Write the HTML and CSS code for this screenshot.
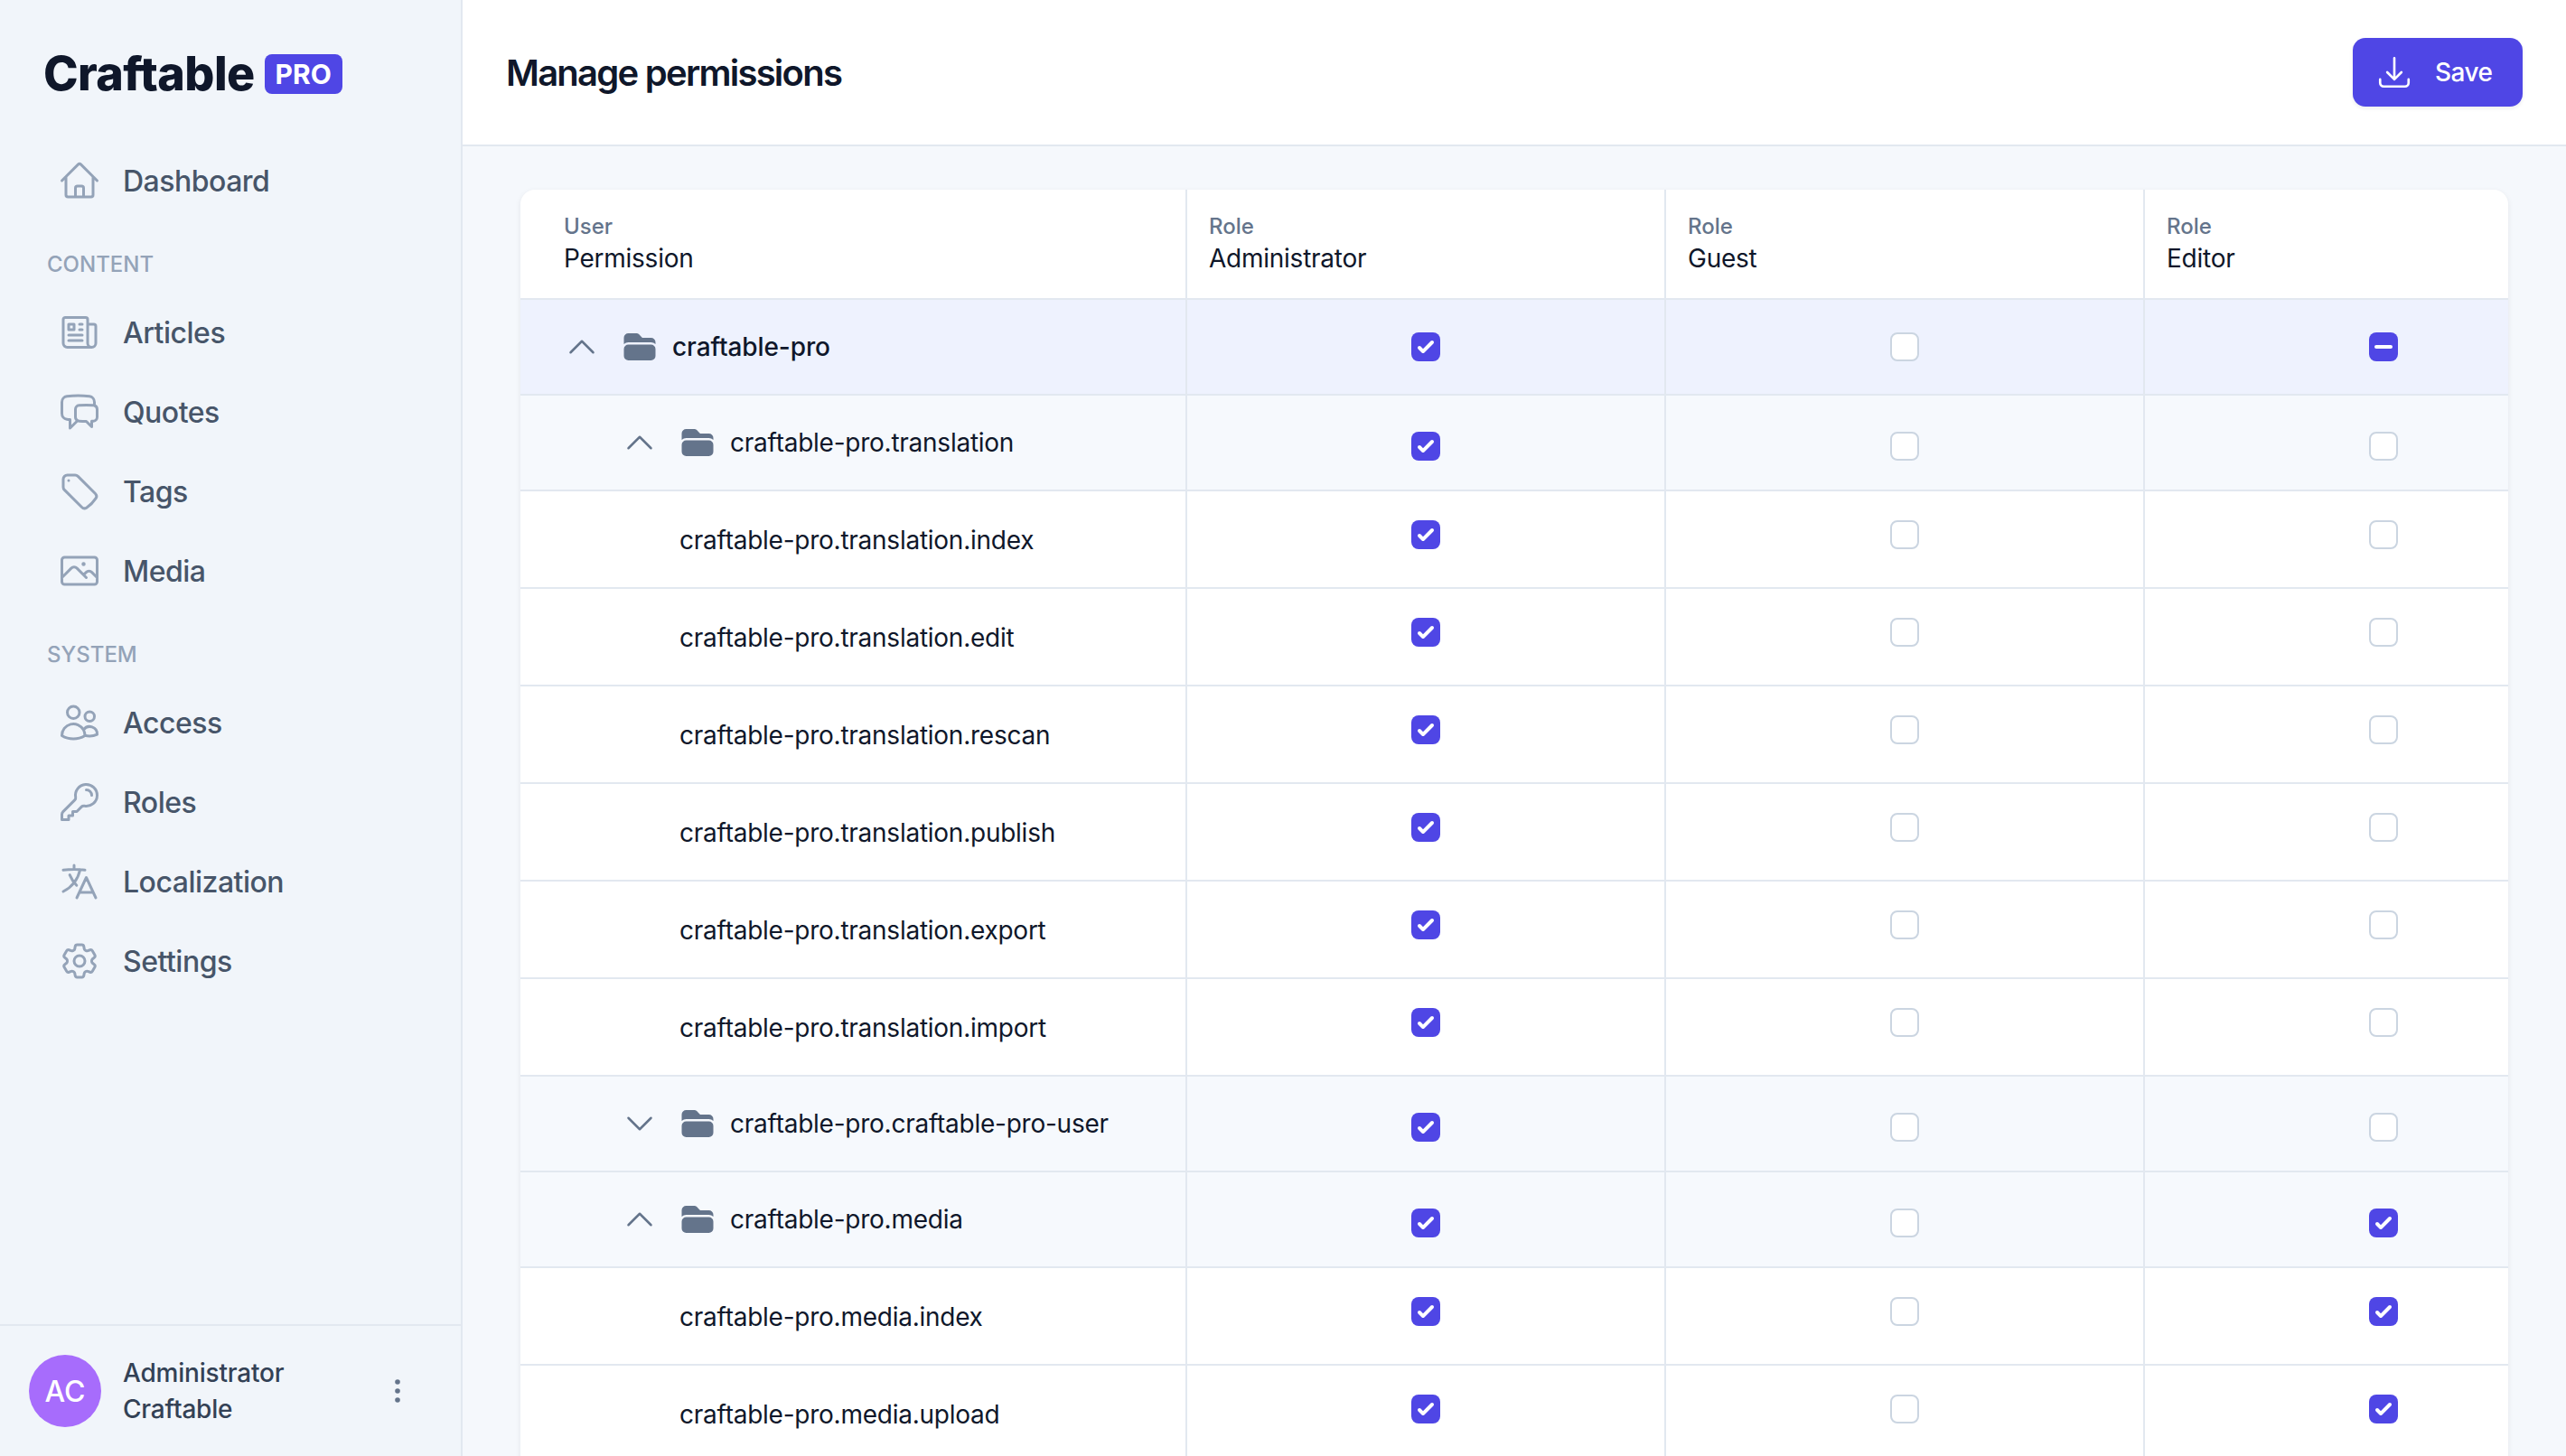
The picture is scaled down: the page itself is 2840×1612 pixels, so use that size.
FILE: index.html
```html
<!DOCTYPE html>
<html lang="en">
<head>
    <meta charset="UTF-8">
    <meta name="viewport" content="width=device-width, initial-scale=1.0">
    <title>Manage permissions</title>
    <link rel="stylesheet" href="styles.css">
</head>
<body>
<svg class="sprite" xmlns="http://www.w3.org/2000/svg">
    <symbol id="i-home" viewBox="0 0 24 24"><path d="M2.25 12l8.954-8.955c.44-.439 1.152-.439 1.591 0L21.75 12M4.5 9.75v10.125c0 .621.504 1.125 1.125 1.125H9.75v-4.875c0-.621.504-1.125 1.125-1.125h2.25c.621 0 1.125.504 1.125 1.125V21h4.125c.621 0 1.125-.504 1.125-1.125V9.75M8.25 21h8.25"/></symbol>
    <symbol id="i-news" viewBox="0 0 24 24"><path d="M12 7.5h1.5m-1.5 3h1.5m-7.5 3h7.5m-7.5 3h7.5m3-9h3.375c.621 0 1.125.504 1.125 1.125V18a2.25 2.25 0 01-2.25 2.25M16.5 7.5V18a2.25 2.25 0 002.25 2.25M16.5 7.5V4.875c0-.621-.504-1.125-1.125-1.125H4.125C3.504 3.75 3 4.254 3 4.875V18a2.25 2.25 0 002.25 2.25h13.5M6 7.5h3v3H6v-3z"/></symbol>
    <symbol id="i-chat" viewBox="0 0 24 24"><path d="M20.25 8.511c.884.284 1.5 1.128 1.5 2.097v4.286c0 1.136-.847 2.1-1.98 2.193-.34.027-.68.052-1.02.072v3.091l-3-3c-1.354 0-2.694-.055-4.02-.163a2.115 2.115 0 01-.825-.242m9.345-8.334a2.126 2.126 0 00-.476-.095 48.64 48.64 0 00-8.048 0c-1.131.094-1.976 1.057-1.976 2.192v4.286c0 .837.46 1.58 1.155 1.951m9.345-8.334V6.637c0-1.621-1.152-3.026-2.76-3.235A48.455 48.455 0 0011.25 3c-2.115 0-4.198.137-6.24.402-1.608.209-2.76 1.614-2.76 3.235v6.226c0 1.621 1.152 3.026 2.76 3.235.577.075 1.157.14 1.74.194V21l4.155-4.155"/></symbol>
    <symbol id="i-tag" viewBox="0 0 24 24"><path d="M9.568 3H5.25A2.25 2.25 0 003 5.25v4.318c0 .597.237 1.17.659 1.591l9.581 9.581c.699.699 1.78.872 2.607.33a18.095 18.095 0 005.223-5.223c.542-.827.369-1.908-.33-2.607L11.16 3.66A2.25 2.25 0 009.568 3z"/><path d="M6 6h.008v.008H6V6z"/></symbol>
    <symbol id="i-photo" viewBox="0 0 24 24"><path d="M2.25 15.75l5.159-5.159a2.25 2.25 0 013.182 0l5.159 5.159m-1.5-1.5l1.409-1.409a2.25 2.25 0 013.182 0l2.909 2.909m-18 3.75h16.5a1.5 1.5 0 001.5-1.5V6a1.5 1.5 0 00-1.5-1.5H3.75A1.5 1.5 0 002.25 6v12a1.5 1.5 0 001.5 1.5zm10.5-11.25h.008v.008h-.008V8.25zm.375 0a.375.375 0 11-.75 0 .375.375 0 01.75 0z"/></symbol>
    <symbol id="i-users" viewBox="0 0 24 24"><path d="M15 19.128a9.38 9.38 0 002.625.372 9.337 9.337 0 004.121-.952 4.125 4.125 0 00-7.533-2.493M15 19.128v-.003c0-1.113-.285-2.16-.786-3.07M15 19.128v.106A12.318 12.318 0 018.624 21c-2.331 0-4.512-.645-6.374-1.766l-.001-.109a6.375 6.375 0 0111.964-3.07M12 6.375a3.375 3.375 0 11-6.75 0 3.375 3.375 0 016.75 0zm8.25 2.25a2.625 2.625 0 11-5.25 0 2.625 2.625 0 015.25 0z"/></symbol>
    <symbol id="i-key" viewBox="0 0 24 24"><path d="M15.75 5.25a3 3 0 013 3m3 0a6 6 0 01-7.029 5.912c-.563-.097-1.159.026-1.563.43L10.5 17.25H8.25v2.25H6v2.25H2.25v-2.818c0-.597.237-1.17.659-1.591l6.499-6.499c.404-.404.527-1 .43-1.563A6 6 0 1121.75 8.25z"/></symbol>
    <symbol id="i-lang" viewBox="0 0 24 24"><path d="M10.5 21l5.25-11.25L21 21m-9-3h7.5M3 5.621a48.474 48.474 0 016-.371m0 0c1.12 0 2.233.038 3.334.114M9 5.25V3m3.334 2.364C11.176 10.658 7.69 15.08 3 17.502m9.334-12.138c.896.061 1.785.147 2.666.257m-4.589 8.495a18.023 18.023 0 01-3.827-5.802"/></symbol>
    <symbol id="i-cog" viewBox="0 0 24 24"><path d="M9.594 3.94c.09-.542.56-.94 1.11-.94h2.593c.55 0 1.02.398 1.11.94l.213 1.281c.063.374.313.686.645.87.074.04.147.083.22.127.324.196.72.257 1.075.124l1.217-.456a1.125 1.125 0 011.37.49l1.296 2.247a1.125 1.125 0 01-.26 1.431l-1.003.827c-.293.24-.438.613-.431.992a6.759 6.759 0 010 .255c-.007.378.138.75.43.99l1.005.828c.424.35.534.954.26 1.43l-1.298 2.247a1.125 1.125 0 01-1.369.491l-1.217-.456c-.355-.133-.75-.072-1.076.124a6.57 6.57 0 01-.22.128c-.331.183-.581.495-.644.869l-.213 1.28c-.09.543-.56.941-1.11.941h-2.594c-.55 0-1.02-.398-1.11-.94l-.213-1.281c-.062-.374-.312-.686-.644-.87a6.52 6.52 0 01-.22-.127c-.325-.196-.72-.257-1.076-.124l-1.217.456a1.125 1.125 0 01-1.369-.49l-1.297-2.247a1.125 1.125 0 01.26-1.431l1.004-.827c.292-.24.437-.613.43-.992a6.932 6.932 0 010-.255c.007-.378-.138-.75-.43-.99l-1.004-.828a1.125 1.125 0 01-.26-1.43l1.297-2.247a1.125 1.125 0 011.37-.491l1.216.456c.356.133.751.072 1.076-.124.072-.044.146-.087.22-.128.332-.183.582-.495.644-.869l.214-1.281z"/><path d="M15 12a3 3 0 11-6 0 3 3 0 016 0z"/></symbol>
    <symbol id="i-tray" viewBox="0 0 24 24"><path d="M3 16.5v2.25A2.25 2.25 0 005.25 21h13.5A2.25 2.25 0 0021 18.75V16.5M16.5 12L12 16.5m0 0L7.5 12m4.5 4.5V3"/></symbol>
    <symbol id="i-up" viewBox="0 0 24 24"><path d="M4.5 15.75l7.5-7.5 7.5 7.5"/></symbol>
    <symbol id="i-down" viewBox="0 0 24 24"><path d="M19.5 8.25l-7.5 7.5-7.5-7.5"/></symbol>
    <symbol id="i-folder" viewBox="0 0 24 24"><path d="M19.5 21a3 3 0 003-3v-4.5a3 3 0 00-3-3h-15a3 3 0 00-3 3V18a3 3 0 003 3h15zM1.5 10.146V6a3 3 0 013-3h5.379a2.25 2.25 0 011.59.659l2.122 2.121c.14.141.331.22.53.22H19.5a3 3 0 013 3v1.146A4.483 4.483 0 0019.5 9h-15a4.483 4.483 0 00-3 1.146z"/></symbol>
    <symbol id="i-check" viewBox="0 0 16 16"><path d="M12.207 4.793a1 1 0 010 1.414l-5 5a1 1 0 01-1.414 0l-2-2a1 1 0 011.414-1.414L6.5 9.086l4.293-4.293a1 1 0 011.414 0z"/></symbol>
    <symbol id="i-minus" viewBox="0 0 32 32"><rect x="6" y="14" width="20" height="4" rx="2"/></symbol>
    <symbol id="i-dots" viewBox="0 0 40 40"><circle cx="20" cy="10" r="2.8"/><circle cx="20" cy="20" r="2.8"/><circle cx="20" cy="30" r="2.8"/></symbol>
</svg>

<aside class="sidebar">
    <div class="logo">
        <span class="logo-name">Craftable</span>
        <span class="logo-badge">PRO</span>
    </div>
    <nav class="nav">
        <a class="nav-item"><svg class="nav-icon"><use href="#i-home"/></svg>Dashboard</a>
        <div class="nav-section">CONTENT</div>
        <a class="nav-item"><svg class="nav-icon"><use href="#i-news"/></svg>Articles</a>
        <a class="nav-item"><svg class="nav-icon"><use href="#i-chat"/></svg>Quotes</a>
        <a class="nav-item"><svg class="nav-icon"><use href="#i-tag"/></svg>Tags</a>
        <a class="nav-item"><svg class="nav-icon"><use href="#i-photo"/></svg>Media</a>
        <div class="nav-section">SYSTEM</div>
        <a class="nav-item"><svg class="nav-icon"><use href="#i-users"/></svg>Access</a>
        <a class="nav-item"><svg class="nav-icon"><use href="#i-key"/></svg>Roles</a>
        <a class="nav-item"><svg class="nav-icon"><use href="#i-lang"/></svg>Localization</a>
        <a class="nav-item"><svg class="nav-icon"><use href="#i-cog"/></svg>Settings</a>
    </nav>
    <div class="account">
        <div class="avatar">AC</div>
        <div class="account-name">Administrator<br>Craftable</div>
        <svg class="account-menu"><use href="#i-dots"/></svg>
    </div>
</aside>

<main class="main">
    <header class="topbar">
        <h1 class="title">Manage permissions</h1>
        <button class="save-btn"><svg class="save-icon"><use href="#i-tray"/></svg>Save</button>
    </header>
    <div class="content">
        <div class="card">
            <div class="row row-head">
                <div class="cell"><span class="head-small">User</span><span class="head-big">Permission</span></div>
                <div class="cell"><span class="head-small">Role</span><span class="head-big">Administrator</span></div>
                <div class="cell"><span class="head-small">Role</span><span class="head-big">Guest</span></div>
                <div class="cell"><span class="head-small">Role</span><span class="head-big">Editor</span></div>
            </div>

            <div class="row row-root">
                <div class="cell cell-name"><svg class="chevron"><use href="#i-up"/></svg><svg class="folder"><use href="#i-folder"/></svg>craftable-pro</div>
                <div class="cell cell-check"><span class="cb cb-on"><svg><use href="#i-check"/></svg></span></div>
                <div class="cell cell-check"><span class="cb"></span></div>
                <div class="cell cell-check"><span class="cb cb-on"><svg><use href="#i-minus"/></svg></span></div>
            </div>

            <div class="row row-folder">
                <div class="cell cell-name"><svg class="chevron"><use href="#i-up"/></svg><svg class="folder"><use href="#i-folder"/></svg>craftable-pro.translation</div>
                <div class="cell cell-check"><span class="cb cb-on"><svg><use href="#i-check"/></svg></span></div>
                <div class="cell cell-check"><span class="cb"></span></div>
                <div class="cell cell-check"><span class="cb"></span></div>
            </div>
            <div class="row row-leaf">
                <div class="cell cell-name">craftable-pro.translation.index</div>
                <div class="cell cell-check"><span class="cb cb-on"><svg><use href="#i-check"/></svg></span></div>
                <div class="cell cell-check"><span class="cb"></span></div>
                <div class="cell cell-check"><span class="cb"></span></div>
            </div>
            <div class="row row-leaf">
                <div class="cell cell-name">craftable-pro.translation.edit</div>
                <div class="cell cell-check"><span class="cb cb-on"><svg><use href="#i-check"/></svg></span></div>
                <div class="cell cell-check"><span class="cb"></span></div>
                <div class="cell cell-check"><span class="cb"></span></div>
            </div>
            <div class="row row-leaf">
                <div class="cell cell-name">craftable-pro.translation.rescan</div>
                <div class="cell cell-check"><span class="cb cb-on"><svg><use href="#i-check"/></svg></span></div>
                <div class="cell cell-check"><span class="cb"></span></div>
                <div class="cell cell-check"><span class="cb"></span></div>
            </div>
            <div class="row row-leaf">
                <div class="cell cell-name">craftable-pro.translation.publish</div>
                <div class="cell cell-check"><span class="cb cb-on"><svg><use href="#i-check"/></svg></span></div>
                <div class="cell cell-check"><span class="cb"></span></div>
                <div class="cell cell-check"><span class="cb"></span></div>
            </div>
            <div class="row row-leaf">
                <div class="cell cell-name">craftable-pro.translation.export</div>
                <div class="cell cell-check"><span class="cb cb-on"><svg><use href="#i-check"/></svg></span></div>
                <div class="cell cell-check"><span class="cb"></span></div>
                <div class="cell cell-check"><span class="cb"></span></div>
            </div>
            <div class="row row-leaf">
                <div class="cell cell-name">craftable-pro.translation.import</div>
                <div class="cell cell-check"><span class="cb cb-on"><svg><use href="#i-check"/></svg></span></div>
                <div class="cell cell-check"><span class="cb"></span></div>
                <div class="cell cell-check"><span class="cb"></span></div>
            </div>

            <div class="row row-folder">
                <div class="cell cell-name"><svg class="chevron"><use href="#i-down"/></svg><svg class="folder"><use href="#i-folder"/></svg>craftable-pro.craftable-pro-user</div>
                <div class="cell cell-check"><span class="cb cb-on"><svg><use href="#i-check"/></svg></span></div>
                <div class="cell cell-check"><span class="cb"></span></div>
                <div class="cell cell-check"><span class="cb"></span></div>
            </div>

            <div class="row row-folder">
                <div class="cell cell-name"><svg class="chevron"><use href="#i-up"/></svg><svg class="folder"><use href="#i-folder"/></svg>craftable-pro.media</div>
                <div class="cell cell-check"><span class="cb cb-on"><svg><use href="#i-check"/></svg></span></div>
                <div class="cell cell-check"><span class="cb"></span></div>
                <div class="cell cell-check"><span class="cb cb-on"><svg><use href="#i-check"/></svg></span></div>
            </div>
            <div class="row row-leaf">
                <div class="cell cell-name">craftable-pro.media.index</div>
                <div class="cell cell-check"><span class="cb cb-on"><svg><use href="#i-check"/></svg></span></div>
                <div class="cell cell-check"><span class="cb"></span></div>
                <div class="cell cell-check"><span class="cb cb-on"><svg><use href="#i-check"/></svg></span></div>
            </div>
            <div class="row row-leaf">
                <div class="cell cell-name">craftable-pro.media.upload</div>
                <div class="cell cell-check"><span class="cb cb-on"><svg><use href="#i-check"/></svg></span></div>
                <div class="cell cell-check"><span class="cb"></span></div>
                <div class="cell cell-check"><span class="cb cb-on"><svg><use href="#i-check"/></svg></span></div>
            </div>
        </div>
    </div>
</main>
</body>
</html>
```

FILE: styles.css
```css
* {
    box-sizing: border-box;
}
html, body {
    height: 100%;
}
body {
    margin: 0;
    display: flex;
    overflow: hidden;
    font-family: Inter, "Noto Sans", sans-serif;
    color: #0f172a;
    background-color: #f5f8fc;
}
.sprite {
    display: none;
}

/* sidebar */
.sidebar {
    width: 512px;
    flex-shrink: 0;
    display: flex;
    flex-direction: column;
    background-color: #f1f5fa;
    border-right: 2px solid #e2e8f0;
}
.logo {
    height: 156px;
    padding: 60px 0 0 48px;
    display: flex;
    align-items: flex-start;
    gap: 11px;
}
.logo-name {
    font-size: 52px;
    line-height: 44px;
    font-weight: 800;
    letter-spacing: -0.6px;
    color: #0f172a;
}
.logo-badge {
    width: 86px;
    height: 44px;
    display: flex;
    align-items: center;
    justify-content: center;
    border-radius: 8px;
    background-color: #4f46e5;
    color: #fff;
    font-size: 30px;
    font-weight: 700;
}
.nav-item {
    height: 88px;
    padding-left: 64px;
    display: flex;
    align-items: center;
    gap: 24px;
    font-size: 32px;
    font-weight: 500;
    letter-spacing: -0.5px;
    color: #475569;
}
.nav-icon {
    width: 48px;
    height: 48px;
    fill: none;
    stroke: #94a3b8;
    stroke-width: 1.5;
    stroke-linecap: round;
    stroke-linejoin: round;
}
.nav-section {
    height: 80px;
    padding: 34px 0 0 52px;
    font-size: 24px;
    line-height: 30px;
    font-weight: 500;
    color: #94a3b8;
}
.account {
    margin-top: auto;
    height: 146px;
    padding: 0 50px 0 32px;
    display: flex;
    align-items: center;
    border-top: 2px solid #e2e8f0;
}
.avatar {
    width: 80px;
    height: 80px;
    display: flex;
    align-items: center;
    justify-content: center;
    border-radius: 50%;
    background-color: #a76cfc;
    color: #fff;
    font-size: 32px;
    font-weight: 500;
}
.account-name {
    margin-left: 24px;
    font-size: 28px;
    line-height: 40px;
    font-weight: 500;
    letter-spacing: -0.2px;
    color: #334155;
}
.account-menu {
    margin-left: auto;
    width: 40px;
    height: 40px;
    fill: #64748b;
}

/* main area */
.main {
    flex: 1;
    min-width: 0;
    display: flex;
    flex-direction: column;
}
.topbar {
    height: 162px;
    flex-shrink: 0;
    padding: 0 48px;
    display: flex;
    align-items: center;
    justify-content: space-between;
    background-color: #fff;
    border-bottom: 2px solid #e2e8f0;
}
.title {
    margin: 0;
    font-size: 40px;
    font-weight: 600;
    letter-spacing: -1.75px;
    color: #0f172a;
}
.save-btn {
    width: 188px;
    height: 76px;
    padding: 0 0 0 25px;
    display: flex;
    align-items: center;
    gap: 24px;
    border: none;
    border-radius: 14px;
    background-color: #4f46e5;
    box-shadow: 0 2px 4px rgba(15, 23, 42, 0.08);
    color: #fff;
    font-family: inherit;
    font-size: 28px;
    font-weight: 500;
    letter-spacing: -0.5px;
}
.save-icon {
    width: 42px;
    height: 42px;
    fill: none;
    stroke: #fff;
    stroke-width: 1.5;
    stroke-linecap: round;
    stroke-linejoin: round;
}
.content {
    flex: 1;
    min-height: 0;
    padding: 48px 64px 0;
}
.card {
    border-radius: 16px 16px 0 0;
    background-color: #fff;
    box-shadow: 0 2px 6px rgba(15, 23, 42, 0.08);
    overflow: hidden;
}

/* table */
.row {
    display: grid;
    grid-template-columns: 738px 530px 530px 530px;
    width: 2328px;
}
.cell {
    border-right: 2px solid #e2e8f0;
    border-bottom: 2px solid #e2e8f0;
}
.row-head {
    height: 122px;
}
.row-head .cell {
    padding: 25px 0 0 24px;
    display: flex;
    flex-direction: column;
}
.row-head .cell:first-child {
    padding-left: 48px;
}
.head-small {
    font-size: 24px;
    line-height: 32px;
    font-weight: 500;
    color: #64748b;
}
.head-big {
    font-size: 28px;
    line-height: 38px;
    letter-spacing: -0.25px;
    color: #0f172a;
}
.row-root {
    height: 106px;
    background-color: #eef2fe;
}
.row-folder {
    height: 106px;
    background-color: #f6f9fd;
}
.row-leaf {
    height: 108px;
}
.cell-name {
    display: flex;
    align-items: center;
    font-size: 28px;
    letter-spacing: -0.25px;
    color: #0f172a;
}
.row-root .cell-name {
    padding-left: 48px;
    font-weight: 500;
    letter-spacing: -0.1px;
}
.row-folder .cell-name {
    padding-left: 112px;
}
.row-leaf .cell-name {
    padding: 2px 0 0 176px;
}
.chevron {
    width: 40px;
    height: 40px;
    margin-right: 24px;
    fill: none;
    stroke: #64748b;
    stroke-width: 1.5;
    stroke-linecap: round;
    stroke-linejoin: round;
}
.folder {
    width: 40px;
    height: 40px;
    margin-right: 16px;
    fill: #64748b;
}
.cell-check {
    display: flex;
    justify-content: center;
    align-items: flex-start;
}
.row-root .cell-check {
    padding-top: 36px;
}
.row-folder .cell-check {
    padding-top: 40px;
}
.row-leaf .cell-check {
    padding-top: 32px;
}
.cb {
    width: 32px;
    height: 32px;
    display: block;
    border: 2px solid #cbd5e1;
    border-radius: 8px;
    background-color: #fff;
}
.cb-on {
    border: none;
    background-color: #4f46e5;
}
.cb svg {
    display: block;
    width: 32px;
    height: 32px;
    fill: #fff;
}
```
